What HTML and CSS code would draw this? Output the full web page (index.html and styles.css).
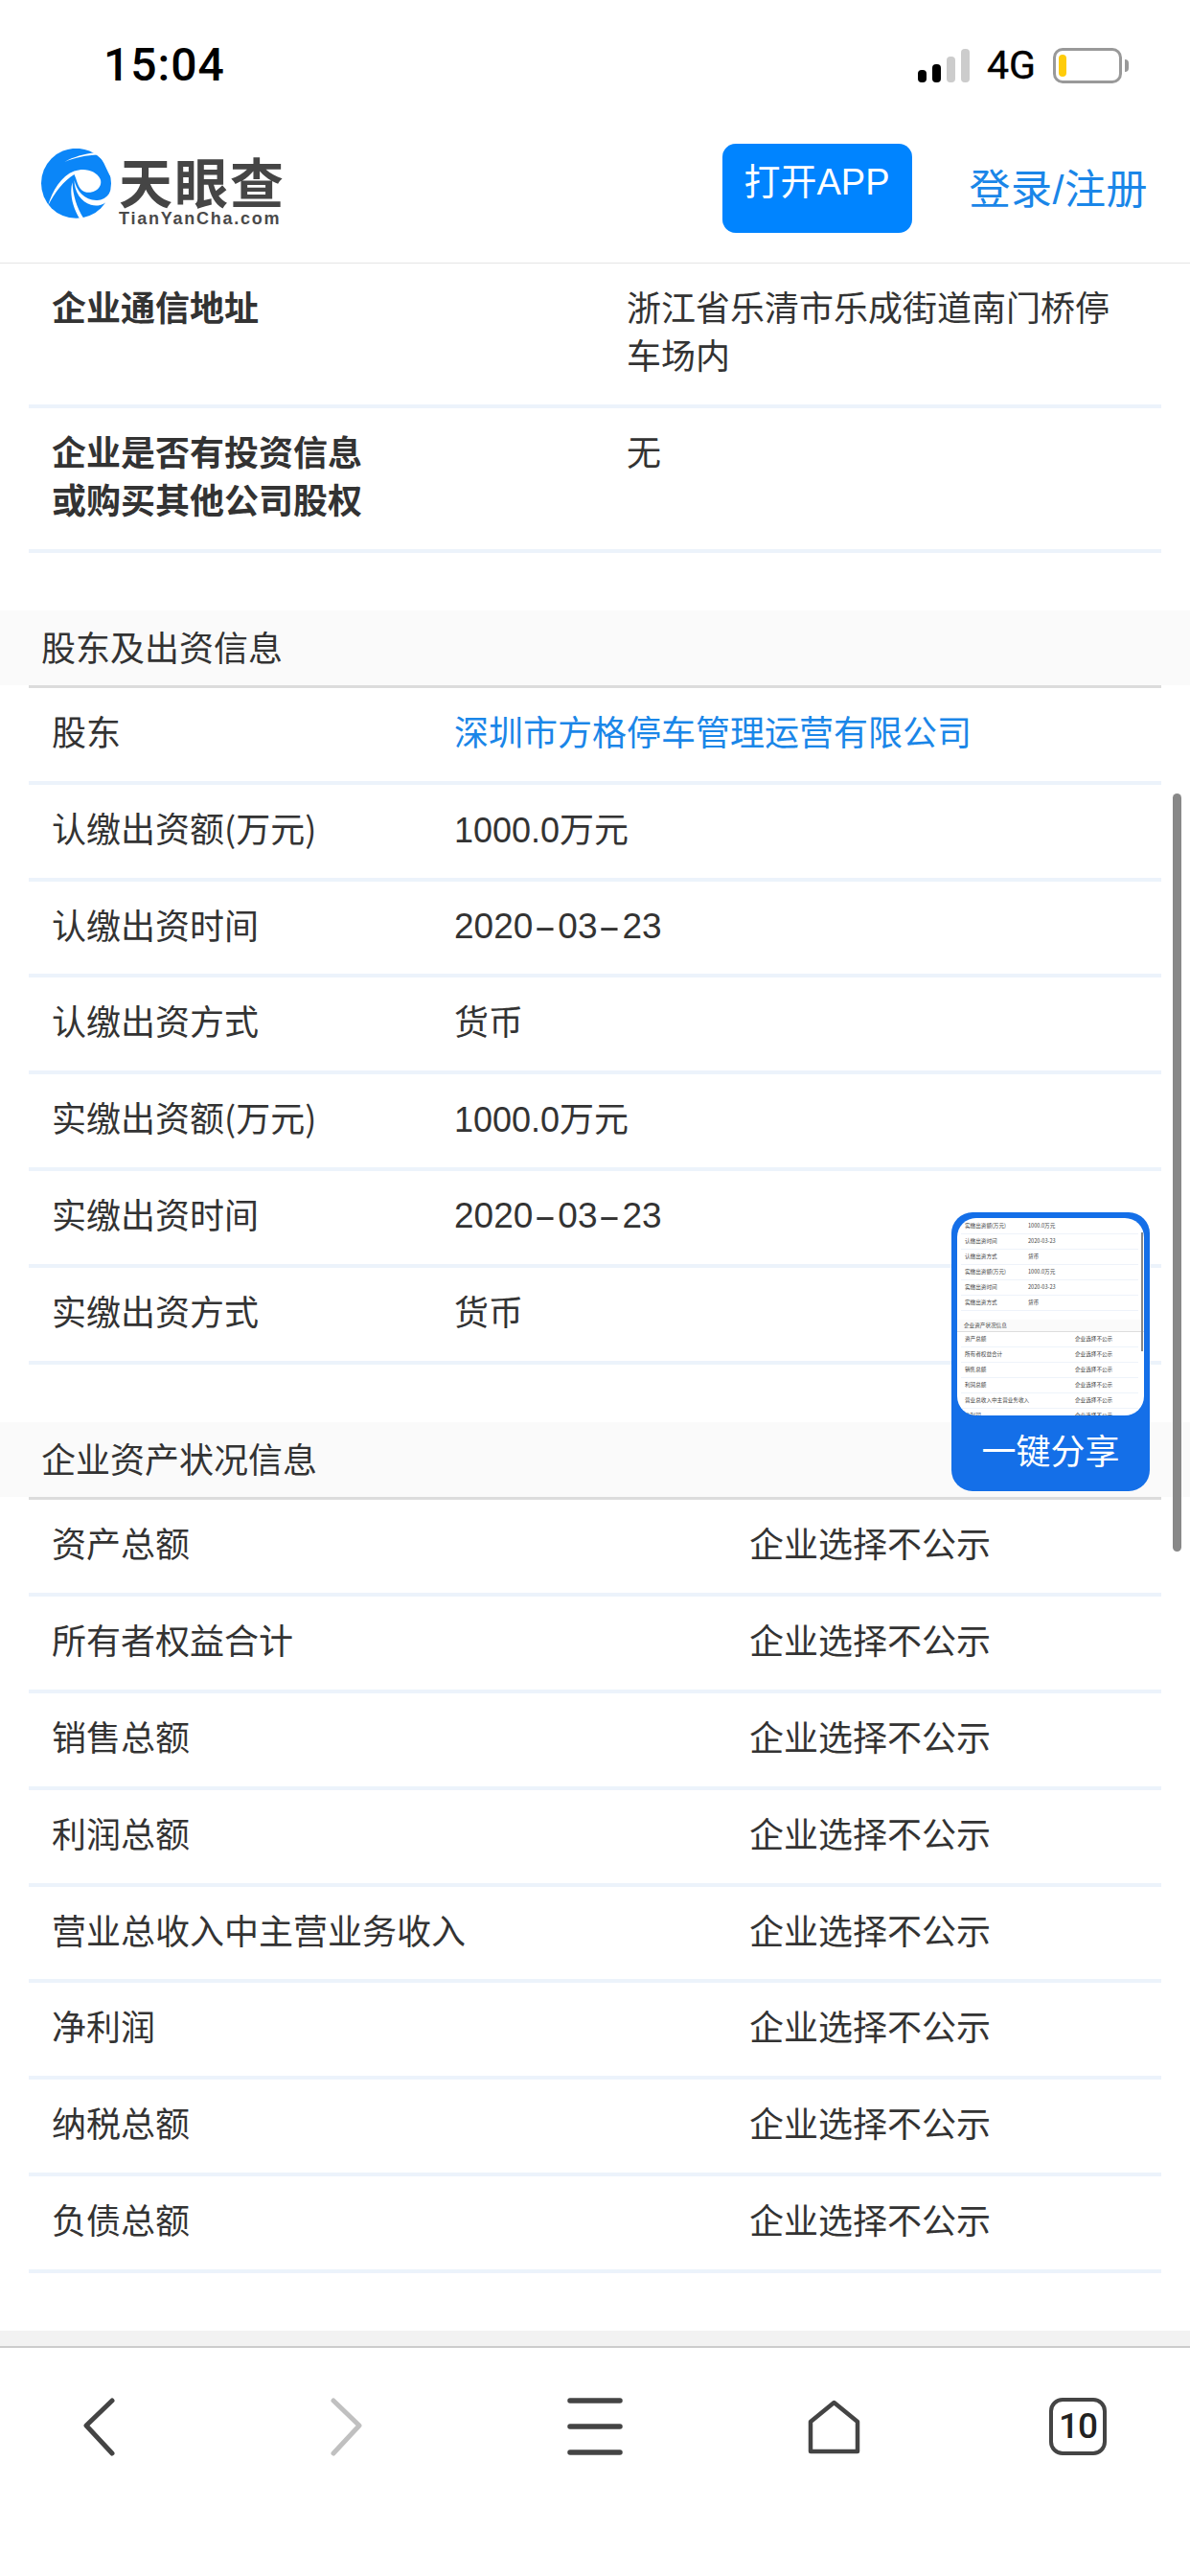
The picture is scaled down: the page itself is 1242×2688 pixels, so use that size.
FILE: index.html
```html
<!DOCTYPE html>
<html lang="zh">
<head>
<meta charset="utf-8">
<title>天眼查</title>
<link rel="stylesheet" href="styles.css">
</head>
<body>
<header class="status">
  <span class="time">15:04</span>
  <div class="status-right">
    <div class="signal"><i class="bar b1"></i><i class="bar b2"></i><i class="bar b3 off"></i><i class="bar b4 off"></i></div>
    <span class="net">4G</span>
    <div class="battery"><i class="charge"></i></div>
    <i class="nub"></i>
  </div>
</header>
<nav class="nav">
  <div class="logo">
    <svg class="globe" viewBox="25 30 218 217" width="73" height="73">
      <circle cx="134" cy="138" r="109" fill="#0b86f8"/>
      <path fill="#fff" d="M98 71C125 55 160 46 194 42L204 49C165 50 130 58 98 71Z"/>
      <path fill="#fff" d="M206 54C222 70 230 100 245 124L250 90L225 50Z"/>
      <path fill="#fff" d="M46 208C60 160 88 115 128 100C160 88 196 98 209 124C216 140 205 162 178 166C158 168 146 158 139 140C135 128 132 118 128 110C95 130 68 165 46 208Z"/>
      <path fill="#fff" d="M128 128C136 165 165 195 205 190C220 188 234 178 242 160L246 175C232 202 205 212 180 205C150 196 128 165 128 128Z"/>
      <path fill="#fff" d="M122 135C124 175 136 215 158 248L146 250C124 215 112 170 122 135Z"/>
    </svg>
    <div class="wordmark">
      <span class="brand">天眼查</span>
      <span class="domain">TianYanCha.com</span>
    </div>
  </div>
  <a class="open-app">打开APP</a>
  <a class="login">登录/注册</a>
</nav>

<main class="content">
  <section class="table table-reg">
    <div class="row strong"><span class="label">企业通信地址</span><span class="value">浙江省乐清市乐成街道南门桥停车场内</span></div>
    <div class="row strong"><span class="label">企业是否有投资信息<br>或购买其他公司股权</span><span class="value">无</span></div>
  </section>

  <h2 class="section-title">股东及出资信息</h2>
  <section class="table table-holder">
    <div class="row"><span class="label">股东</span><a class="value link">深圳市方格停车管理运营有限公司</a></div>
    <div class="row"><span class="label">认缴出资额(万元)</span><span class="value"><span class="amount">1000.0</span>万元</span></div>
    <div class="row"><span class="label">认缴出资时间</span><span class="value date">2020<i class="hy">-</i>03<i class="hy">-</i>23</span></div>
    <div class="row"><span class="label">认缴出资方式</span><span class="value">货币</span></div>
    <div class="row"><span class="label">实缴出资额(万元)</span><span class="value"><span class="amount">1000.0</span>万元</span></div>
    <div class="row"><span class="label">实缴出资时间</span><span class="value date">2020<i class="hy">-</i>03<i class="hy">-</i>23</span></div>
    <div class="row"><span class="label">实缴出资方式</span><span class="value">货币</span></div>
  </section>

  <h2 class="section-title">企业资产状况信息</h2>
  <section class="table table-assets">
    <div class="row"><span class="label">资产总额</span><span class="value">企业选择不公示</span></div>
    <div class="row"><span class="label">所有者权益合计</span><span class="value">企业选择不公示</span></div>
    <div class="row"><span class="label">销售总额</span><span class="value">企业选择不公示</span></div>
    <div class="row"><span class="label">利润总额</span><span class="value">企业选择不公示</span></div>
    <div class="row"><span class="label">营业总收入中主营业务收入</span><span class="value">企业选择不公示</span></div>
    <div class="row"><span class="label">净利润</span><span class="value">企业选择不公示</span></div>
    <div class="row"><span class="label">纳税总额</span><span class="value">企业选择不公示</span></div>
    <div class="row"><span class="label">负债总额</span><span class="value">企业选择不公示</span></div>
  </section>
  <div class="footer-strip"></div>

  <i class="scrollbar"></i>

  <aside class="share">
    <div class="mini">
      <div class="mini-row"><span>实缴出资额(万元)</span><span class="mv">1000.0万元</span></div>
      <div class="mini-row"><span>认缴出资时间</span><span class="mv">2020-03-23</span></div>
      <div class="mini-row"><span>认缴出资方式</span><span class="mv">货币</span></div>
      <div class="mini-row"><span>实缴出资额(万元)</span><span class="mv">1000.0万元</span></div>
      <div class="mini-row"><span>实缴出资时间</span><span class="mv">2020-03-23</span></div>
      <div class="mini-row"><span>实缴出资方式</span><span class="mv">货币</span></div>
      <div class="mini-head">企业资产状况信息</div>
      <div class="mini-row wide"><span>资产总额</span><span class="mv">企业选择不公示</span></div>
      <div class="mini-row wide"><span>所有者权益合计</span><span class="mv">企业选择不公示</span></div>
      <div class="mini-row wide"><span>销售总额</span><span class="mv">企业选择不公示</span></div>
      <div class="mini-row wide"><span>利润总额</span><span class="mv">企业选择不公示</span></div>
      <div class="mini-row wide"><span>营业总收入中主营业务收入</span><span class="mv">企业选择不公示</span></div>
      <div class="mini-row wide"><span>净利润</span><span class="mv">企业选择不公示</span></div>
      <i class="mini-scroll"></i>
    </div>
    <div class="share-label">一键分享</div>
  </aside>
</main>

<footer class="toolbar">
  <svg class="tool back" viewBox="0 0 40 64" width="40" height="64"><polyline points="32,5 5,31 32,60"/></svg>
  <svg class="tool forward" viewBox="0 0 40 64" width="40" height="64"><polyline points="4,5 31,31 4,60"/></svg>
  <svg class="tool menu" viewBox="0 0 62 64" width="62" height="64"><path d="M5 5H57M5 32H57M5 59H57"/></svg>
  <svg class="tool home" viewBox="0 0 62 64" width="62" height="64"><path d="M30.5 7L6 27V58H55V27Z"/></svg>
  <div class="tabs">10</div>
</footer>
</body>
</html>
```

FILE: styles.css
```css
* { box-sizing: border-box; }
html, body { margin: 0; padding: 0; }
body {
  width: 1242px;
  height: 2688px;
  overflow: hidden;
  display: flex;
  flex-direction: column;
  background: #fff;
  color: #333;
  font-family: "Noto Sans CJK SC", "Liberation Sans", sans-serif;
}
i { font-style: normal; display: block; }

/* status bar */
.status {
  height: 136px;
  flex: none;
  display: flex;
  align-items: center;
  padding: 0 64px 0 108px;
  color: #000;
}
.time {
  font: 500 48px/1 Roboto, sans-serif;
  letter-spacing: 1px;
}
.status-right { margin-left: auto; display: flex; align-items: center; }
.signal { display: flex; align-items: flex-end; gap: 6px; height: 35px; }
.bar { width: 9px; background: #000; border-radius: 4px; }
.bar.off { background: #ccc; }
.b1 { height: 13px; }
.b2 { height: 19px; }
.b3 { height: 27px; }
.b4 { height: 35px; }
.net { margin-left: 18px; font: 400 41px/1 Roboto, sans-serif; -webkit-text-stroke: 0.4px #000; }
.battery {
  margin-left: 18px;
  width: 72px;
  height: 37px;
  border: 3px solid #999;
  border-radius: 10px;
  padding: 4px 3px;
}
.charge { width: 8px; height: 23px; background: #ffcc0a; border-radius: 4px; }
.nub { width: 4px; height: 13px; margin-left: 3px; background: #999; border-radius: 0 4px 4px 0; }

/* nav */
.nav {
  height: 139px;
  flex: none;
  display: flex;
  align-items: flex-start;
  padding: 14px 44px 0 43px;
  border-bottom: 1px solid #e5e5e5;
}
.logo { display: flex; margin-top: 5px; }
.globe { flex: none; }
.wordmark { margin-left: 8px; display: flex; flex-direction: column; width: 172px; padding-top: 5px; }
.brand {
  font-weight: 700;
  font-size: 56px;
  line-height: 56px;
  color: #454545;
  letter-spacing: 2px;
  white-space: nowrap;
}
.domain {
  font: 700 18px/20px "Liberation Sans", sans-serif;
  color: #4a4a4a;
  letter-spacing: 1.75px;
  white-space: nowrap;
  margin-top: 2px;
}
.open-app {
  margin-left: auto;
  width: 198px;
  height: 93px;
  border-radius: 14px;
  background: #0084ff;
  color: #fff;
  font-family: "Liberation Sans", "Noto Sans CJK SC", sans-serif;
  font-size: 38px;
  line-height: 50px;
  padding-top: 15px;
  text-align: center;
  white-space: nowrap;
}
.login {
  margin-left: 60px;
  margin-top: 20px;
  color: #1a86e8;
  font-family: "Liberation Sans", "Noto Sans CJK SC", sans-serif;
  font-size: 43px;
  letter-spacing: 0.5px;
  line-height: 56px;
  white-space: nowrap;
}

/* content */
.content { flex: 1; position: relative; overflow: hidden; display: flex; flex-direction: column; }
.table { margin: 0 30px; }
.row {
  display: grid;
  padding: 19px 0 27.9px 24px;
  border-bottom: 4px solid #ecf3fb;
  font-size: 36px;
  line-height: 50px;
  color: #333;
}
.table-reg { margin-bottom: 60px; }
.table-reg .row { grid-template-columns: 600px 530px; }
.table-holder .row { grid-template-columns: 420px 1fr; }
.table-assets .row { grid-template-columns: 728px 1fr; }
.table-holder { margin-bottom: 60px; }
.table-assets { margin-bottom: 60px; }
.strong .label { font-weight: 700; }
.link { color: #1a86e8; }
.amount { font-family: "Liberation Sans", sans-serif; font-size: 36px; line-height: 1; }
.date { font-family: "Liberation Sans", sans-serif; font-size: 37px; height: 50px; line-height: 56px; }
.hy { display: inline-block; width: 26px; text-align: center; transform: scaleX(1.9); }

.section-title {
  margin: 0;
  height: 78px;
  padding-left: 43px;
  background: #fafafa;
  font-size: 36px;
  font-weight: 400;
  line-height: 74px;
  color: #333;
  flex: none;
}
.section-title + .table { border-top: 3px solid #dcdcdc; }

.footer-strip { flex: 1; background: #f2f2f2; }

.scrollbar {
  position: absolute;
  left: 1224px;
  top: 553px;
  width: 9px;
  height: 791px;
  border-radius: 5px;
  background: #888;
}

/* share widget */
.share {
  position: absolute;
  left: 993px;
  top: 990px;
  width: 207px;
  height: 291px;
  padding: 6px;
  border-radius: 22px;
  background: #146fe8;
  display: flex;
  flex-direction: column;
}
.mini {
  position: relative;
  height: 206px;
  flex: none;
  overflow: hidden;
  background: #fff;
  border-radius: 20px;
  padding-top: 1px;
  font-size: 5.6px;
  color: #444;
}
.mini-row {
  display: grid;
  grid-template-columns: 66px 1fr;
  height: 16px;
  margin: 0 6px 0 4px;
  padding-left: 4px;
  line-height: 15px;
  border-bottom: 1px solid #eef3fa;
  white-space: nowrap;
}
.mini-row.wide { grid-template-columns: 115px 1fr; }
.mini-head {
  height: 13px;
  margin-top: 9px;
  padding-left: 7px;
  line-height: 12px;
  background: #fafafa;
  border-bottom: 1px solid #ddd;
}
.mini-scroll {
  position: absolute;
  left: 192px;
  top: 15px;
  width: 2px;
  height: 124px;
  background: #888;
}
.share-label {
  flex: 1;
  color: #fff;
  font-size: 36px;
  line-height: 70px;
  text-align: center;
}

/* toolbar */
.toolbar {
  height: 240px;
  flex: none;
  display: flex;
  align-items: flex-start;
  padding: 50px 0 0 85px;
  border-top: 2px solid #cccccc;
  background: #fff;
}
.tool { fill: none; stroke: #444; stroke-width: 5; stroke-linecap: round; stroke-linejoin: round; flex: none; }
.forward { stroke: #c0c0c0; margin-left: 219px; }
.menu { margin-left: 206px; stroke-width: 5.5; }
.home { margin-left: 188px; stroke-width: 4.5; }
.tabs {
  margin: 2px 0 0 193px;
  width: 60px;
  height: 60px;
  border: 4px solid #444;
  border-radius: 14px;
  color: #222;
  font: 500 37px/52px Roboto, sans-serif;
  letter-spacing: -1px;
  text-align: center;
}
```
